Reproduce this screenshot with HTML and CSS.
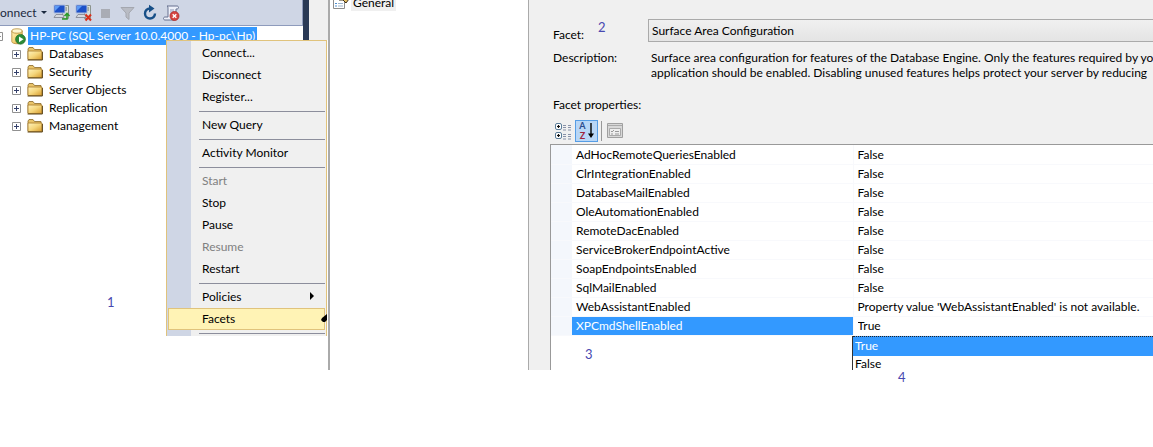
FILE: index.html
```
<!DOCTYPE html>
<html lang="en">
<head>
    <meta charset="UTF-8">
    <meta name="viewport" content="width=device-width, initial-scale=1.0">
    <title>Surface Area Configuration</title>
    <link rel="stylesheet" href="styles.css">
</head>
<body>
    <!-- shared tree icons -->
    <svg class="defs" width="0" height="0" aria-hidden="true">
        <defs>
            <linearGradient id="gold" x1="0" y1="0" x2="1" y2="1">
                <stop offset="0" stop-color="#fff3bd"/>
                <stop offset=".5" stop-color="#f5d67c"/>
                <stop offset="1" stop-color="#d69a2c"/>
            </linearGradient>
            <symbol id="folder" viewBox="0 0 16 14">
                <path d="M1 12V2l1-1.500h4l1.500 2H14V12z" fill="#e9c46a" stroke="#8a6a2a" stroke-width=".8"/>
                <path d="M1 4h14v8.500H1z" fill="url(#gold)" stroke="#a67a28" stroke-width=".8"/>
                <path d="M.6 13h14.800V5" fill="none" stroke="#5c4518"/>
            </symbol>
            <symbol id="plus" viewBox="0 0 9 9">
                <path d="M.5.5h8v8h-8z" fill="#fff" stroke="#919191"/>
                <path d="M2 4.500h5M4.500 2v5" stroke="#34406b"/>
            </symbol>
            <symbol id="pcs" viewBox="0 0 18 16">
                <path d="M9.500 1.500h6v13h-6z" fill="#dadfd8" stroke="#8c948c"/>
                <path d="M11 4h3M11 6h3" stroke="#6b746b"/>
                <path d="M1 1h11v8H1z" fill="#1c50c8" stroke="#aebddd"/>
                <path d="M2 2h5L2 7z" fill="#5d9bf5"/>
                <path d="M3 10.500h7l1 3H1z" fill="#d6d9df" stroke="#7d828e" stroke-width=".8"/>
            </symbol>
        </defs>
    </svg>

    <main class="screen">
        <section class="explorer">
            <div class="explorer-main">
                <div class="toolbar">
                    <button type="button" class="connect">onnect <span class="caret"></span></button>
                    <button type="button" class="tool" aria-label="Connect Object Explorer">
                        <svg width="18" height="18" viewBox="0 0 18 18">
                            <use href="#pcs" width="18" height="16"/>
                            <path d="M9 15h5V10M11.500 12 14 9.500l2.500 2.500" fill="none" stroke="#2b9a2b" stroke-width="1.600"/>
                        </svg>
                    </button>
                    <button type="button" class="tool" aria-label="Disconnect">
                        <svg width="18" height="18" viewBox="0 0 18 18">
                            <use href="#pcs" width="18" height="16"/>
                            <path d="m10.500 10.500 5.500 6m0-6-5.500 6" stroke="#d9301c" stroke-width="2"/>
                        </svg>
                    </button>
                    <button type="button" class="tool" aria-label="Stop">
                        <svg width="18" height="18" viewBox="0 0 18 18"><path d="M4 5h9v9H4z" fill="#a9acb4"/></svg>
                    </button>
                    <button type="button" class="tool" aria-label="Filter">
                        <svg width="18" height="18" viewBox="0 0 18 18">
                            <path d="M2 3.500h13L10 9v6.500L7 13V9z" fill="#b9bcc4" stroke="#a4a7af"/>
                        </svg>
                    </button>
                    <button type="button" class="tool" aria-label="Refresh">
                        <svg width="18" height="18" viewBox="0 0 18 18">
                            <path d="M14 9.500A5 5 0 1 1 9 4.500" fill="none" stroke="#174f87" stroke-width="2.400"/>
                            <path d="M8 .8 13.500 4.500 8 8.500z" fill="#174f87"/>
                        </svg>
                    </button>
                    <button type="button" class="tool" aria-label="Clear log">
                        <svg width="18" height="18" viewBox="0 0 18 18">
                            <path d="M4 2h10c2 0 2 3 0 3h-1v9c0 1-1 2-2 2H2c-2 0-2-3 0-3h3V5c0-1 0-3-1-3z" fill="#eef1fa" stroke="#66718f"/>
                            <path d="M7 6h4M7 8h4M7 10h3" stroke="#8d97b5"/>
                            <circle cx="11.500" cy="12" r="4.500" fill="#d64541" stroke="#ab2b2b" stroke-width=".8"/>
                            <path d="m9.700 10.200 3.600 3.600m0-3.600-3.600 3.600" stroke="#fff" stroke-width="1.400"/>
                        </svg>
                    </button>
                </div>

                <div class="tree">
                    <div class="server">
                        <svg class="minus" width="4" height="9" viewBox="0 0 4 9"><path d="M0 .5h2.500v8H0M0 4.500h1" fill="none" stroke="#919191"/></svg>
                        <svg width="15" height="17" viewBox="0 0 15 17">
                            <path d="M.8 3v10.500c0 3 10.400 3 10.400 0V3z" fill="url(#gold)" stroke="#b58a35" stroke-width=".8"/>
                            <ellipse cx="6" cy="3" rx="5.200" ry="2.200" fill="#fff6cf" stroke="#b58a35" stroke-width=".8"/>
                            <circle cx="9.500" cy="11.300" r="4.900" fill="#2d8b38" stroke="#1e6b2a" stroke-width=".7"/>
                            <path d="M8 8.500 12.500 11.300 8 14.200z" fill="#fff"/>
                        </svg>
                        <span class="server-name">HP-PC (SQL Server 10.0.4000 - Hp-pc\Hp)</span>
                    </div>
                    <ul class="nodes">
                        <li><svg width="9" height="9"><use href="#plus"/></svg><svg width="16" height="14"><use href="#folder"/></svg><span>Databases</span></li>
                        <li><svg width="9" height="9"><use href="#plus"/></svg><svg width="16" height="14"><use href="#folder"/></svg><span>Security</span></li>
                        <li><svg width="9" height="9"><use href="#plus"/></svg><svg width="16" height="14"><use href="#folder"/></svg><span>Server Objects</span></li>
                        <li><svg width="9" height="9"><use href="#plus"/></svg><svg width="16" height="14"><use href="#folder"/></svg><span>Replication</span></li>
                        <li><svg width="9" height="9"><use href="#plus"/></svg><svg width="16" height="14"><use href="#folder"/></svg><span>Management</span></li>
                    </ul>
                </div>
            </div>
            <div class="splitter"></div>

            <div class="context-menu">
                <button type="button">Connect...</button>
                <button type="button">Disconnect</button>
                <button type="button">Register...</button>
                <hr>
                <button type="button">New Query</button>
                <hr>
                <button type="button">Activity Monitor</button>
                <hr>
                <button type="button" disabled>Start</button>
                <button type="button">Stop</button>
                <button type="button">Pause</button>
                <button type="button" disabled>Resume</button>
                <button type="button">Restart</button>
                <hr>
                <button type="button">Policies <span class="arrow"></span></button>
                <button type="button" class="active">Facets
                    <svg class="ink" width="6" height="8" viewBox="0 0 6 8"><path d="M6 0 1 4 0 6l2 2h2l2-2z"/></svg>
                </button>
                <hr>
            </div>
            <span class="note note-1">1</span>
        </section>

        <nav class="pages">
            <a href="#" class="page">
                <svg width="17" height="16" viewBox="0 0 17 16">
                    <path d="M.5.5h11v14H.5z" fill="#fff" stroke="#8c8c8c"/>
                    <path d="M2 9.500h2M2 12h2" stroke="#4f8fd0"/>
                    <path d="M5 9.500h5M5 12h5" stroke="#9cb4cc"/>
                    <path d="M6 6h4l3 3 3-4-2-3H7z" fill="#e4bd62" stroke="#3d3018"/>
                </svg>
                <span>General</span>
            </a>
        </nav>

        <section class="facets">
            <div class="form">
                <label class="facet-label" for="facet">Facet:</label>
                <select id="facet">
                    <option>Surface Area Configuration</option>
                </select>
                <span class="desc-label">Description:</span>
                <p>Surface area configuration for features of the Database Engine. Only the features required by yo<br>application should be enabled. Disabling unused features helps protect your server by reducing</p>
            </div>

            <h2>Facet properties:</h2>
            <div class="grid-tools">
                <button type="button" aria-label="Categorized">
                    <svg width="18" height="18" viewBox="0 0 18 18">
                        <g fill="#fff" stroke="#5b7d99"><rect x="1.500" y="1.500" width="6" height="6" rx="1.500"/><rect x="1.500" y="10.500" width="6" height="6" rx="1.500"/></g>
                        <path d="M3 4.500h3M4.500 3v3M3 13.500h3M4.500 12v3" stroke="#111" stroke-width="1.200"/>
                        <path d="M9 3.500h4M9 5.500h4M9 8h4M9 12.500h4M9 14.500h4M9 17h4M14 3.500h3M14 5.500h3M14 8h3M14 12.500h3M14 14.500h3M14 17h3" stroke="#8791a8" stroke-dasharray="3 1"/>
                    </svg>
                </button>
                <button type="button" class="pressed" aria-label="Alphabetical">
                    <span class="az"><b>A</b><b>Z</b></span>
                    <svg width="6" height="16" viewBox="0 0 6 16"><path d="M3 0v12" stroke="#000" stroke-width="1.400"/><path d="M0 10.500h6L3 15z"/></svg>
                </button>
                <span class="divider"></span>
                <button type="button" aria-label="Property pages" disabled>
                    <svg width="16" height="16" viewBox="0 0 16 16">
                        <path d="M.5.5h15v14H.5z" fill="#d8d8d8" stroke="#a0a0a0"/>
                        <path d="M1 2.500h14" stroke="#aaa"/>
                        <path d="M2.500 5.500h11v7h-11z" fill="#eee" stroke="#aaa"/>
                        <path d="m4 8 1 1 2-2M8 8.500h4M4 11h2M8 11h4" fill="none" stroke="#999"/>
                    </svg>
                </button>
            </div>

            <div class="properties">
                <table>
                    <colgroup><col class="col-gutter"><col class="col-name"><col></colgroup>
                    <tr><td></td><th scope="row">AdHocRemoteQueriesEnabled</th><td>False</td></tr>
                    <tr><td></td><th scope="row">ClrIntegrationEnabled</th><td>False</td></tr>
                    <tr><td></td><th scope="row">DatabaseMailEnabled</th><td>False</td></tr>
                    <tr><td></td><th scope="row">OleAutomationEnabled</th><td>False</td></tr>
                    <tr><td></td><th scope="row">RemoteDacEnabled</th><td>False</td></tr>
                    <tr><td></td><th scope="row">ServiceBrokerEndpointActive</th><td>False</td></tr>
                    <tr><td></td><th scope="row">SoapEndpointsEnabled</th><td>False</td></tr>
                    <tr><td></td><th scope="row">SqlMailEnabled</th><td>False</td></tr>
                    <tr><td></td><th scope="row">WebAssistantEnabled</th><td>Property value 'WebAssistantEnabled' is not available.</td></tr>
                    <tr class="selected"><td></td><th scope="row"><label for="xpcmd">XPCmdShellEnabled</label></th><td><input id="xpcmd" type="text" value="True"></td></tr>
                </table>
                <ul class="choices" role="listbox" aria-label="XPCmdShellEnabled">
                    <li role="option" aria-selected="true">True</li>
                    <li role="option" aria-selected="false">False</li>
                </ul>
            </div>
            <span class="note note-2">2</span>
            <span class="note note-3">3</span>
            <span class="note note-4">4</span>
        </section>
    </main>
</body>
</html>
```
FILE: styles.css
```
* {
    box-sizing: border-box;
}
body {
    margin: 0;
    min-height: 100vh;
    background: #fff;
    color: #000;
    font-family: Lato, "Open Sans", sans-serif;
    font-size: 12px;
    line-height: 15px;
}
button, input, select {
    font: inherit;
    color: inherit;
    margin: 0;
    padding: 0;
    border: 0;
    background: none;
}
svg {
    display: block;
    flex: none;
}
ul {
    list-style: none;
    margin: 0;
    padding: 0;
}
.defs {
    position: absolute;
}
.screen {
    display: flex;
}

/* object explorer */
.explorer {
    position: relative;
    display: flex;
    align-items: flex-start;
    flex: 0 0 330px;
    border-right: 2px solid #aaa;
}
.explorer-main {
    flex: 1;
}
.toolbar {
    display: flex;
    align-items: center;
    gap: 4px;
    height: 26px;
    background: #cfd6e5;
    border-bottom: 1px solid #8e9bbc;
    border-right: 1px solid #8e9bbc;
}
.connect {
    display: flex;
    align-items: center;
    gap: 4px;
    width: 49px;
    color: #1b293e;
}
.caret {
    border: 3px solid transparent;
    border-top-color: #1b293e;
    border-bottom: 0;
}
.tool {
    width: 18px;
    height: 18px;
}
.tree {
    padding-top: 1px;
}
.server {
    display: flex;
    align-items: center;
    height: 18px;
}
.minus {
    margin-right: 7px;
}
.server-name {
    margin-left: 2px;
    padding: 0 2px;
    line-height: 18px;
    background: #3399ff;
    color: #fff;
    white-space: nowrap;
}
.nodes li {
    display: flex;
    align-items: center;
    gap: 6px;
    height: 18px;
    padding-left: 12px;
}
.nodes span {
    padding-bottom: 1px;
}
.splitter {
    width: 25px;
    height: 40px;
    background: #f0f0f0;
    border-left: 6px solid #293955;
}

/* right-click menu */
.context-menu {
    position: absolute;
    left: 166px;
    top: 40px;
    width: 161px;
    padding: 1px 1px 0;
    border: 1px solid #e0c37c;
    border-bottom: 0;
    background: linear-gradient(to right, #cfd6e5 24px, #f0f0f0 24px);
}
.context-menu button {
    display: flex;
    align-items: center;
    justify-content: space-between;
    width: 100%;
    height: 22px;
    padding: 0 10px 2px 33px;
    border: 1px solid transparent;
}
.context-menu button:disabled {
    color: #808080;
}
.context-menu hr {
    height: 1px;
    margin: 3px 0 2px 31px;
    border: 0;
    background: #8c8e9c;
}
.context-menu .active {
    padding-right: 0;
    background: #fff3b5;
    border-color: #e0c37c;
}
.arrow {
    border: 4px solid transparent;
    border-left-color: #000;
    border-right: 0;
}
.ink {
    margin-right: -3px;
}

/* page list */
.pages {
    flex: 0 0 198px;
}
.page {
    display: flex;
    align-items: center;
    gap: 1px;
    height: 18px;
    margin-top: -7px;
    padding-left: 3px;
    color: #000;
    text-decoration: none;
}
.page span {
    padding: 1px 2px;
    background: #f0f0f0;
}

/* facet dialog */
.facets {
    position: relative;
    flex: 1;
    min-width: 0;
    padding: 19px 0 0 21px;
    background: #f0f0f0;
    border-left: 1px solid #aaa;
}
.form {
    display: grid;
    grid-template-columns: 92px 1fr;
    column-gap: 3px;
    row-gap: 8px;
    padding-left: 3px;
}
.facet-label {
    padding-top: 8px;
}
.form select {
    width: 100%;
    height: 23px;
    padding: 0 3px;
    appearance: none;
    border: 1px solid #aaa;
    border-right: 0;
    background: linear-gradient(#f0f0f0, #e4e4e4);
}
.form p {
    margin: 0 0 0 3px;
    white-space: nowrap;
    overflow: hidden;
}
h2 {
    margin: 17px 0 8px 3px;
    font-size: 12px;
    font-weight: normal;
}
.grid-tools {
    display: flex;
    align-items: center;
    gap: 3px;
    padding-left: 4px;
    height: 22px;
}
.grid-tools button {
    display: flex;
    align-items: center;
    justify-content: center;
}
.grid-tools .pressed {
    gap: 2px;
    width: 23px;
    height: 22px;
    background: #b8d6f6;
    border: 1px solid #569de5;
}
.az {
    display: grid;
    font-size: 9px;
    line-height: 10px;
}
.az b {
    color: #2b4b8c;
}
.az b + b {
    color: #a0233c;
}
.divider {
    width: 1px;
    height: 20px;
    margin-right: 2px;
    background: #999;
}
.properties {
    margin-top: 2px;
    background: #fff;
    border: 1px solid #999;
    border-width: 1px 0 0 1px;
}
table {
    width: 100%;
    table-layout: fixed;
    border-collapse: collapse;
}
.col-gutter {
    width: 21px;
}
.col-name {
    width: 281px;
}
th, td {
    height: 19px;
    padding: 0 4px;
    border-bottom: 1px solid #f8f9fc;
    text-align: left;
    font-weight: normal;
    white-space: nowrap;
}
td:first-child {
    background: #f4f7fc;
}
th {
    border-right: 1px solid #f8f9fc;
}
.selected th {
    background: #3399ff;
    color: #fff;
}
td input {
    display: block;
    width: 100%;
    height: 15px;
}
.choices {
    margin-left: 301px;
    border-left: 1px solid #333;
}
.choices li {
    height: 14px;
    padding-left: 2px;
    line-height: 15px;
}
.choices [aria-selected="true"] {
    height: 20px;
    line-height: 18px;
    background: #3399ff;
    border-top: 1px dotted #222;
    color: #fff;
}

/* step numbers */
.note {
    position: absolute;
    color: #4848b0;
    font-size: 13px;
}
.note-1 {
    left: 107px;
    top: 295px;
}
.note-2 {
    left: 69px;
    top: 20px;
}
.note-3 {
    left: 56px;
    top: 347px;
}
.note-4 {
    left: 369px;
    top: 370px;
}
```
